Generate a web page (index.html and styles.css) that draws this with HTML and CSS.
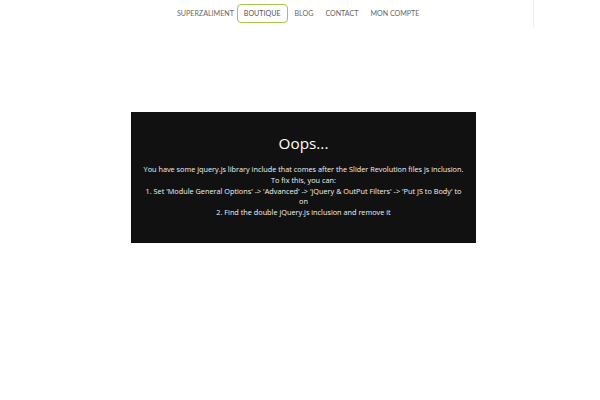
FILE: index.html
```html
<!DOCTYPE html>
<html>
<head>
<meta charset="utf-8">
<link rel="stylesheet" href="styles.css">
</head>
<body>
<header class="header">
  <nav class="nav">
    <a class="nav-item">SUPERZALIMENT</a>
    <a class="nav-item active">BOUTIQUE</a>
    <a class="nav-item">BLOG</a>
    <a class="nav-item">CONTACT</a>
    <a class="nav-item">MON COMPTE</a>
  </nav>
  <div class="divider"></div>
</header>
<main class="main">
  <section class="oops">
    <h1 class="oops-title">Oops...</h1>
    <p class="oops-text">You have some jquery.js library include that comes after the Slider Revolution files js inclusion.<br>To fix this, you can:<br>1. Set 'Module General Options' -&gt; 'Advanced' -&gt; 'jQuery &amp; OutPut Filters' -&gt; 'Put JS to Body' to on<br>2. Find the double jQuery.js inclusion and remove it</p>
  </section>
</main>
</body>
</html>
```
FILE: styles.css
```css
html, body {
  margin: 0;
  padding: 0;
  background: #fff;
}
body {
  width: 600px;
  height: 400px;
  overflow: hidden;
  font-family: "Open Sans", sans-serif;
}
.header {
  height: 28px;
  position: relative;
}
.nav {
  display: flex;
  align-items: center;
  padding-left: 177px;
  padding-top: 4px;
  height: 19px;
  gap: 12px;
}
.nav-item {
  font-family: "Lato", sans-serif;
  font-size: 7.1px;
  color: #666;
  height: 17px;
  line-height: 17px;
  white-space: nowrap;
}
.nav-item.active {
  border: 1.5px solid #a7c44b;
  color: #555;
  border-radius: 4px;
  padding: 0 6px;
  margin: 0 -5px 0 -9px;
}
.divider {
  position: absolute;
  left: 533px;
  top: 0;
  width: 1px;
  height: 27px;
  background: #eee;
}
.main {
  padding-top: 84px;
  padding-left: 131px;
}
.oops {
  width: 345px;
  height: 131px;
  background: #111;
  box-sizing: border-box;
  padding: 20px 11px 0;
  text-align: center;
  color: #fff;
}
.oops-title {
  margin: 0;
  font-size: 15.3px;
  font-weight: 400;
  line-height: 22px;
}
.oops-text {
  margin: 10px 0 0;
  font-size: 7.3px;
  line-height: 10.8px;
  color: #f2f2f2;
}
```
